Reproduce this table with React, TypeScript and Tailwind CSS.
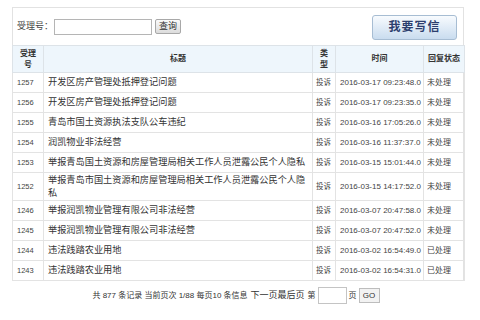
import React from "react";

type Row = { id: string; title: string; type: string; time: string; status: string };

const rows: Row[] = [
  { id: "1257", title: "开发区房产管理处抵押登记问题", type: "投诉", time: "2016-03-17 09:23:48.0", status: "未处理" },
  { id: "1256", title: "开发区房产管理处抵押登记问题", type: "投诉", time: "2016-03-17 09:23:35.0", status: "未处理" },
  { id: "1255", title: "青岛市国土资源执法支队公车违纪", type: "投诉", time: "2016-03-16 17:05:26.0", status: "未处理" },
  { id: "1254", title: "润凯物业非法经营", type: "投诉", time: "2016-03-16 11:37:37.0", status: "未处理" },
  { id: "1253", title: "举报青岛国土资源和房屋管理局相关工作人员泄露公民个人隐私", type: "投诉", time: "2016-03-15 15:01:44.0", status: "未处理" },
  { id: "1252", title: "举报青岛市国土资源和房屋管理局相关工作人员泄露公民个人隐私", type: "投诉", time: "2016-03-15 14:17:52.0", status: "未处理" },
  { id: "1246", title: "举报润凯物业管理有限公司非法经营", type: "投诉", time: "2016-03-07 20:47:58.0", status: "未处理" },
  { id: "1245", title: "举报润凯物业管理有限公司非法经营", type: "投诉", time: "2016-03-07 20:47:52.0", status: "未处理" },
  { id: "1244", title: "违法践踏农业用地", type: "投诉", time: "2016-03-02 16:54:49.0", status: "已处理" },
  { id: "1243", title: "违法践踏农业用地", type: "投诉", time: "2016-03-02 16:54:31.0", status: "已处理" },
];

const cjk = "font-['Liberation_Sans','Noto_Sans_CJK_SC',sans-serif]";

export default function App() {
  return (
    <div className={`w-[480px] h-[320px] bg-white text-[#333] ${cjk}`}>
      <div className="pt-[7px] pl-[12px]">
        <div className="w-[452px] border border-[#e2e2e2] border-b-0">
          {/* search bar */}
          <div className="h-[37px] flex items-center pl-[4px] pr-[6px]">
            <span className="text-[9px] text-[#444]">受理号：</span>
            <input className="ml-[1px] w-[98px] h-[16px] border border-[#b5b5b5] bg-white outline-none" />
            <button className="ml-[3px] w-[26px] h-[15px] border border-[#a8a8a8] rounded-[2px] bg-gradient-to-b from-[#fafafa] to-[#dcdcdc] text-[9px] leading-none text-[#333]">
              查询
            </button>
            <button className="ml-auto mt-[1px] w-[85px] h-[25px] border border-[#a7bdd3] rounded-[3px] bg-gradient-to-b from-[#f8fbfe] to-[#c9dcef] text-[12px] font-bold text-[#2c3e6e] tracking-[1px]">
              我要写信
            </button>
          </div>
          {/* letters list */}
          <table className="w-[452px] table-fixed border-collapse -ml-px">
            <colgroup>
              <col className="w-[31px]" />
              <col className="w-[269px]" />
              <col className="w-[23px]" />
              <col className="w-[88px]" />
              <col className="w-[41px]" />
            </colgroup>
            <thead>
              <tr className="h-[27px] bg-[#eef6fc] text-[8px] font-bold text-[#333]">
                <th className="border border-[#dde3e8] leading-[11px] px-[6px]">受理号</th>
                <th className="border border-[#dde3e8]">标题</th>
                <th className="border border-[#dde3e8] leading-[11px] px-[6px]">类型</th>
                <th className="border border-[#dde3e8]">时间</th>
                <th className="border border-[#dde3e8] whitespace-nowrap">回复状态</th>
              </tr>
            </thead>
            <tbody>
              {rows.map((r) => (
                <tr key={r.id} className={r.id === "1252" ? "h-[28px]" : "h-[20px]"}>
                  <td className="border border-[#e3e3e3] pl-[4px] text-[7.5px] text-[#444]">{r.id}</td>
                  <td className="border border-[#e3e3e3] pl-[4px] pr-[4px] text-[9.2px] leading-[13px] text-[#333]">{r.title}</td>
                  <td className="border border-[#e3e3e3] pl-[3px] text-[7.5px] text-[#444] whitespace-nowrap">{r.type}</td>
                  <td className="border border-[#e3e3e3] pl-[4px] text-[8px] text-[#444] whitespace-nowrap">{r.time}</td>
                  <td className="border border-[#e3e3e3] pl-[3px] text-[8px] text-[#444] whitespace-nowrap">{r.status}</td>
                </tr>
              ))}
            </tbody>
          </table>
        </div>
      </div>
      {/* pager */}
      <div className="mt-[6px] flex items-center justify-center text-[8px] text-[#333] pr-[8px]">
        <span>共 877 条记录 当前页次 1/88 每页10 条信息 </span>
        <span className="ml-[3px] text-[9px]">下一页最后页</span>
        <span className="ml-[3px]">第</span>
        <input className="ml-[2px] w-[29px] h-[17px] border border-[#c4c4c4] outline-none" />
        <span className="ml-[2px]">页</span>
        <button className="ml-[2px] w-[21px] h-[15px] border border-[#bdbdbd] bg-[#f2f2f2] text-[8px] leading-none">GO</button>
      </div>
    </div>
  );
}
